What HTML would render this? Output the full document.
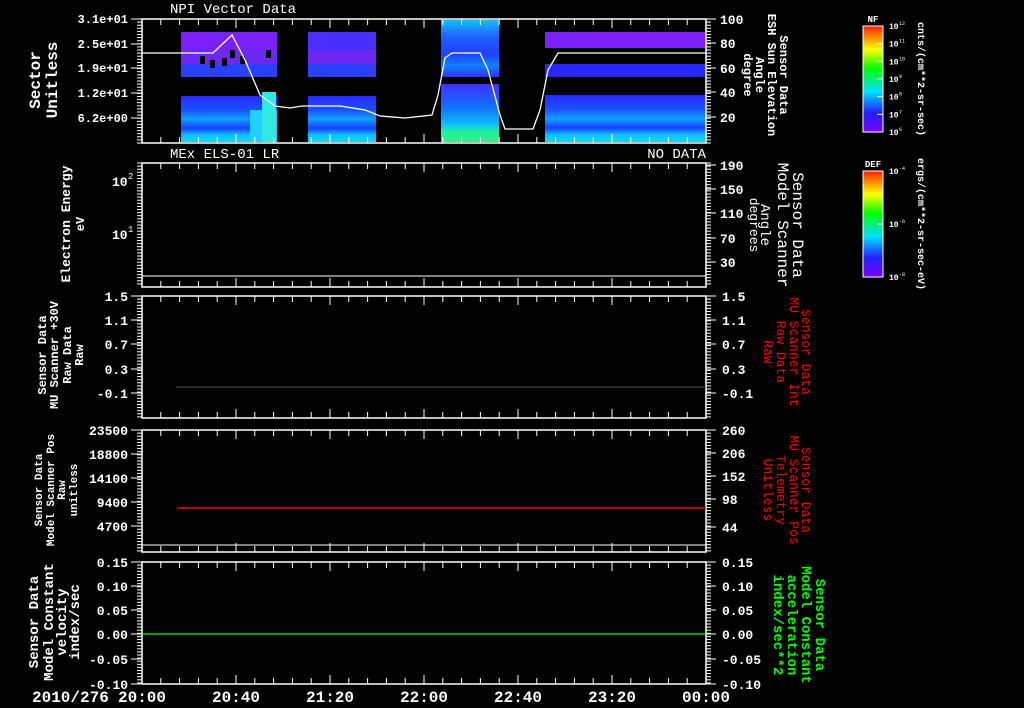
<!DOCTYPE html>
<html><head><meta charset="utf-8"><style>
html,body{margin:0;padding:0;background:#000;width:1024px;height:708px;overflow:hidden}
svg{display:block}
text{font-family:"Liberation Mono",monospace;fill:#fff}
</style></head><body>
<svg id="s" width="1024" height="708" xmlns="http://www.w3.org/2000/svg">
<defs>
<linearGradient id="rb" x1="0" y1="1" x2="0" y2="0">
<stop offset="0" stop-color="#8000ff"/><stop offset="0.18" stop-color="#2020ff"/><stop offset="0.38" stop-color="#00e0ff"/><stop offset="0.6" stop-color="#00ff00"/><stop offset="0.78" stop-color="#ffff00"/><stop offset="1" stop-color="#ff2000"/>
</linearGradient>
<linearGradient id="lo1" x1="0" y1="0" x2="0" y2="1">
<stop offset="0" stop-color="#2a2aff"/><stop offset="0.3" stop-color="#1a50ff"/><stop offset="0.5" stop-color="#10a0ff"/><stop offset="0.7" stop-color="#1840ff"/><stop offset="0.85" stop-color="#10c0ff"/><stop offset="1" stop-color="#10d8f0"/>
</linearGradient>
<linearGradient id="lo3" x1="0" y1="0" x2="0" y2="1">
<stop offset="0" stop-color="#4030ff"/><stop offset="0.4" stop-color="#1070ff"/><stop offset="0.7" stop-color="#10c0ff"/><stop offset="0.82" stop-color="#20f0a0"/><stop offset="1" stop-color="#30f080"/>
</linearGradient>
<linearGradient id="hi3" x1="0" y1="0" x2="0" y2="1">
<stop offset="0" stop-color="#10c0ff"/><stop offset="0.3" stop-color="#2060ff"/><stop offset="0.6" stop-color="#2040ff"/><stop offset="0.8" stop-color="#1080ff"/><stop offset="1" stop-color="#3030ff"/>
</linearGradient>
</defs>
<g id="g"></g>
</svg>
<script>
var g=document.getElementById('g'),S='http://www.w3.org/2000/svg';
function el(n,a,t){var e=document.createElementNS(S,n);for(var k in a)e.setAttribute(k,a[k]);if(t!=null)e.textContent=t;g.appendChild(e);return e;}
function R(x,y,w,h,c){el('rect',{x:x,y:y,width:w,height:h,fill:c});}
function L(x1,y1,x2,y2,c,w){el('line',{x1:x1,y1:y1,x2:x2,y2:y2,stroke:c||'#fff','stroke-width':w||1});}
function T(x,y,s,o){o=o||{};var a={x:x,y:y,'font-size':o.fs||12};if(o.a)a['text-anchor']=o.a;var st='';if(o.c)st+='fill:'+o.c+';';if(o.b)st+='font-weight:bold;';if(st)a.style=st;if(o.t)a.transform=o.t;el('text',a,s);}
var X0=142,X1=706;
// spectrogram
R(181,32,96,18,'#7a20f8');R(181,50,96,14,'#6a28f0');R(181,64,96,13,'#2a40ff');
R(181,96,96,46,'url(#lo1)');R(250,110,27,32,'#20d0ff');R(262,92,14,50,'#30e8e0');
R(308,32,68,18,'#4a30ff');R(308,50,68,14,'#6a28f0');R(308,64,68,13,'#2a40ff');
R(308,96,68,46,'url(#lo1)');
R(441,20,58,57,'url(#hi3)');R(441,84,58,58,'url(#lo3)');
R(545,32,161,16,'#7a20f8');R(545,64,161,13,'#2828ff');R(545,95,161,47,'url(#lo1)');
[[230,50],[240,56],[222,58],[266,50],[200,56],[210,60]].forEach(function(p){R(p[0],p[1],5,8,'#000');});
el('polyline',{points:'142,53 213,53 232,35 245,60 260,95 275,106 290,108 302,106 340,106 365,110 380,116 405,118 432,115 438,95 445,58 452,53 480,53 488,70 500,115 505,129 533,129 540,110 548,70 558,53 706,53',fill:'none',stroke:'#fff','stroke-width':1.3});
var P=[[19,143],[163,287],[296,418],[430,552],[562,684]];
P.forEach(function(p){
 el('rect',{x:X0,y:p[0],width:X1-X0,height:p[1]-p[0],fill:'none',stroke:'#fff','stroke-width':1.5});
 for(var i=1;i<30;i++){var x=X0+i*18.8,l=(i%5==0)?9:6;L(x,p[0],x,p[0]+l);L(x,p[1],x,p[1]-l);}
 for(var y=p[0];y<=p[1];y+=3.1){L(X0-5,y,X0,y);L(X1,y,X1+5,y);}
});
var B={fs:13,b:1};
T(170,13,'NPI Vector Data',{fs:14});
[['3.1e+01',19],['2.5e+01',44],['1.9e+01',68],['1.2e+01',93],['6.2e+00',118]].forEach(function(a){T(128,a[1]+4,a[0],{a:'end',fs:12,b:1});L(X0-11,a[1],X0,a[1]);});
[['100',19],['80',43],['60',68],['40',92],['20',117]].forEach(function(a){T(720,a[1]+5,a[0],B);L(X1,a[1],X1+10,a[1]);});
T(0,0,'Sector',{fs:16,a:'middle',b:1,t:'translate(40,80) rotate(-90)'});
T(0,0,'Unitless',{fs:16,a:'middle',b:1,t:'translate(57,80) rotate(-90)'});
[['Sensor Data',788],['ESH Sun Elevation',776],['Angle',764],['degree',752]].forEach(function(a){T(0,0,a[0],{fs:12,b:1,a:'middle',t:'translate('+(a[1]-8)+',75) rotate(90)'});});
T(170,158,'MEx ELS-01 LR',{fs:14});T(706,158,'NO DATA',{fs:14,a:'end'});
T(112,186,'10',{fs:13,b:1});T(128,179,'2',{fs:9});T(112,239,'10',{fs:13,b:1});T(128,232,'1',{fs:9});
L(X0,276,X1,276);
[['190',165],['150',189],['110',213],['70',238],['30',262]].forEach(function(a){T(720,a[1]+5,a[0],B);L(X1,a[1],X1+10,a[1]);});
T(0,0,'Electron Energy',{fs:13,b:1,a:'middle',t:'translate(70,224) rotate(-90)'});
T(0,0,'eV',{fs:12,b:1,a:'middle',t:'translate(84,224) rotate(-90)'});
[['Sensor Data',803,16],['Model Scanner',788,16],['Angle',771,14],['degrees',760,13]].forEach(function(a){T(0,0,a[0],{fs:a[2],a:'middle',t:'translate('+(a[1]-10)+',225) rotate(90)'});});
[['1.5',296],['1.1',320],['0.7',344],['0.3',369],['-0.1',393]].forEach(function(a){T(128,a[1]+5,a[0],{a:'end',fs:13,b:1});T(722,a[1]+5,a[0],B);L(X0-11,a[1],X0,a[1]);L(X1,a[1],X1+10,a[1]);});
L(176,387,X1,387,'#555');
[['Sensor Data',46],['MU Scanner +30V',58],['Raw Data',71],['Raw',83]].forEach(function(a){T(0,0,a[0],{fs:12,b:1,a:'middle',t:'translate('+a[1]+',355) rotate(-90)'});});
[['Sensor Data',806],['MU Scanner Int',794],['Raw Data',781],['Raw',768]].forEach(function(a){T(0,0,a[0],{fs:13,a:'middle',c:'#ff0000',t:'translate('+(a[1]-4)+',352) rotate(90)'});});
[['23500',430],['18800',454],['14100',478],['9400',502],['4700',526]].forEach(function(a){T(128,a[1]+5,a[0],{a:'end',fs:13,b:1});L(X0-11,a[1],X0,a[1]);});
[['260',430],['206',453],['152',476],['98',499],['44',527]].forEach(function(a){T(722,a[1]+5,a[0],B);L(X1,a[1],X1+10,a[1]);});
L(X0,545,X1,545);
L(177,508,X1,508,'#ff0000',1.5);
[['Sensor Data',39],['Model Scanner Pos',51],['Raw',62],['unitless',74]].forEach(function(a){T(0,0,a[0],{fs:11,b:1,a:'middle',t:'translate('+(a[1]+3)+',490) rotate(-90)'});});
[['Sensor Data',806],['MU Scanner Pos',794],['Telemetry',781],['Unitless',768]].forEach(function(a){T(0,0,a[0],{fs:13,a:'middle',c:'#ff0000',t:'translate('+(a[1]-4)+',490) rotate(90)'});});
[['0.15',562],['0.10',586],['0.05',610],['0.00',634],['-0.05',659],['-0.10',684]].forEach(function(a){T(128,a[1]+5,a[0],{a:'end',fs:13,b:1});T(722,a[1]+5,a[0],B);L(X0-11,a[1],X0,a[1]);L(X1,a[1],X1+10,a[1]);});
L(X0,634,X1,634,'#00ff00',1.3);
[['Sensor Data',38],['Model Constant',53],['velocity',66],['index/sec',79]].forEach(function(a){T(0,0,a[0],{fs:14,b:1,a:'middle',t:'translate('+a[1]+',622) rotate(-90)'});});
[['Sensor Data',820],['Model Constant',806],['acceleration',792],['index/sec**2',778]].forEach(function(a){T(0,0,a[0],{fs:14,b:1,a:'middle',c:'#00ff00',t:'translate('+(a[1]-4)+',625) rotate(90)'});});
T(32,702,'2010/276',{fs:16,b:1});
['20:00','20:40','21:20','22:00','22:40','23:20','00:00'].forEach(function(s,i){T(X0+i*94,702,s,{fs:16,b:1,a:'middle'});});
function cb(y,lab,labs,unit){
 el('rect',{x:863,y:y,width:20,height:106,fill:'url(#rb)',stroke:'#fff','stroke-width':1});
 T(873,y-4,lab,{fs:9,a:'middle',b:1});
 labs.forEach(function(l,i){var yy=y+106*i/(labs.length-1);T(889,yy+3,'10',{fs:8,b:1});T(899,yy-1,l,{fs:5});L(877,yy,883,yy);});
 T(0,0,unit,{fs:10,b:1,a:'middle',t:'translate(918,'+(y+53)+') rotate(90)'});
}
cb(26,'NF',['12','11','10','9','8','7','6'],'cnts/(cm**2-sr-sec)');
cb(171,'DEF',['-4','-6','-8'],'ergs/(cm**2-sr-sec-eV)');
</script>
</body></html>
